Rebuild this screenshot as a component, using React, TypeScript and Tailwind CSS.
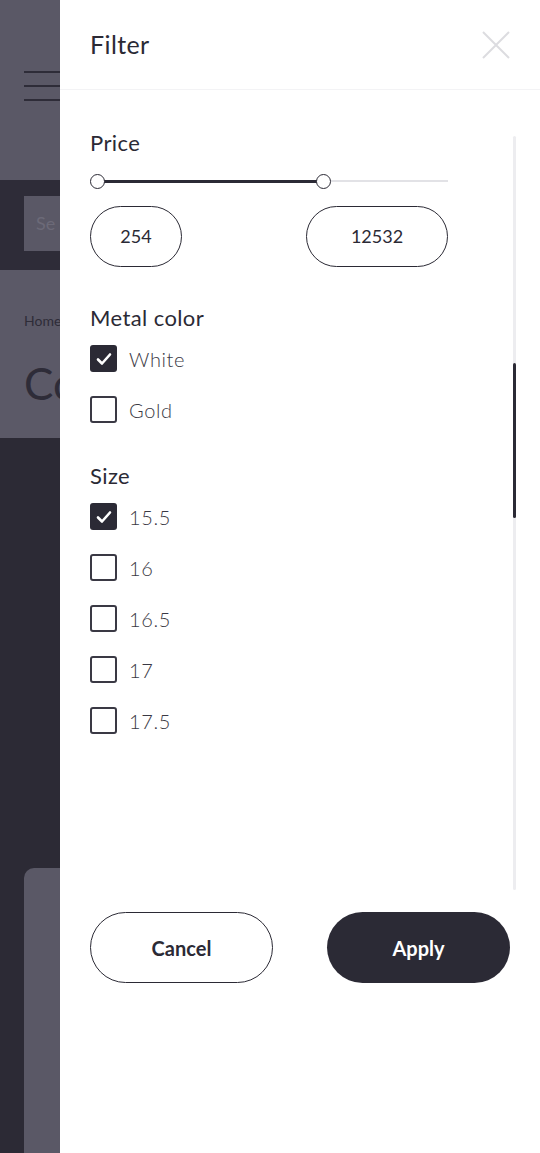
import { useState } from 'react'

const font = { fontFamily: 'Lato, "Noto Sans", sans-serif' }

type Opt = { label: string; checked: boolean }

function Check({ label, checked, onToggle }: Opt & { onToggle: () => void }) {
  return (
    <button onClick={onToggle} className="flex items-center gap-3 h-[27px] text-left">
      <span
        className={
          'w-[27px] h-[27px] rounded-[3px] flex items-center justify-center ' +
          (checked ? 'bg-[#2b2a35]' : 'border-2 border-[#3a3944] bg-white')
        }
      >
        {checked && (
          <svg width="16" height="14" viewBox="0 0 16 14" fill="none">
            <path d="M2 7.5l4 4L14 2.5" stroke="white" strokeWidth="2.6" strokeLinecap="round" strokeLinejoin="round" />
          </svg>
        )}
      </span>
      <span className="text-[20px] font-light text-[#3a3944] tracking-[0.6px]">{label}</span>
    </button>
  )
}

export default function App() {
  const [metal, setMetal] = useState<Opt[]>([
    { label: 'White', checked: true },
    { label: 'Gold', checked: false },
  ])
  const [sizes, setSizes] = useState<Opt[]>([
    { label: '15.5', checked: true },
    { label: '16', checked: false },
    { label: '16.5', checked: false },
    { label: '17', checked: false },
    { label: '17.5', checked: false },
  ])

  const toggle = (list: Opt[], i: number) => list.map((o, j) => (j === i ? { ...o, checked: !o.checked } : o))

  return (
    <div className="flex w-[540px] h-[1153px] overflow-hidden" style={font}>
      {/* dimmed page behind the drawer */}
      <div className="w-[60px] shrink-0 flex flex-col bg-[#2c2a35]">
        <div className="h-[180px] bg-[#5a5866] pt-[71px] pl-6 flex flex-col gap-[12px]">
          <div className="h-[2px] bg-[#2e2c38]" />
          <div className="h-[2px] bg-[#2e2c38]" />
          <div className="h-[2px] bg-[#2e2c38]" />
        </div>
        <div className="h-[90px] bg-[#2e2c38] pt-[16px] pl-6">
          <div className="h-[55px] bg-[#5a5866] pl-3 flex items-center text-[18px] text-[#6c6a78]">Se</div>
        </div>
        <div className="h-[168px] bg-[#5b5967] pl-6 pt-[40px]">
          <div className="text-[14px] text-[#2e2c38]">Home</div>
          <div className="text-[44px] leading-none mt-[30px] text-[#2e2c38]">Co</div>
        </div>
        <div className="flex-1 pl-6 pt-[430px]">
          <div className="h-full bg-[#5a5866] rounded-tl-[10px]" />
        </div>
      </div>

      {/* filter drawer */}
      <div className="flex-1 bg-white flex flex-col text-[#2b2a35]">
        <div className="h-[90px] shrink-0 border-b border-[#f3f3f5] flex items-center justify-between pl-[30px] pr-[30px]">
          <span className="text-[25px] tracking-[0.4px] text-[#2b2a35]">Filter</span>
          <button aria-label="Close">
            <svg width="28" height="28" viewBox="0 0 28 28" fill="none">
              <path d="M1 1l26 26M27 1L1 27" stroke="#dcdce0" strokeWidth="2" />
            </svg>
          </button>
        </div>

        <div className="h-[800px] shrink-0 flex">
          <div className="flex-1 pl-[30px] pr-[65px] pt-[39px]">
            <h3 className="text-[22px] leading-[28px] tracking-[0.4px]">Price</h3>
            <div className="mt-[17px] h-[14px] relative flex items-center">
              <div className="absolute left-[7px] right-0 h-[2px] bg-[#e2e2e6]" />
              <div className="absolute left-[7px] w-[226px] h-[3px] bg-[#2b2a35]" />
              <div className="absolute left-0 w-[15px] h-[15px] rounded-full border-[1.5px] border-[#2b2a35] bg-white" />
              <div className="absolute left-[226px] w-[15px] h-[15px] rounded-full border-[1.5px] border-[#2b2a35] bg-white" />
            </div>
            <div className="mt-[18px] flex justify-between">
              <div className="w-[92px] h-[61px] rounded-full border-[1.5px] border-[#2b2a35] flex items-center justify-center text-[18px]">254</div>
              <div className="w-[142px] h-[61px] rounded-full border-[1.5px] border-[#2b2a35] flex items-center justify-center text-[18px]">12532</div>
            </div>

            <h3 className="mt-[37px] text-[22px] leading-[28px] tracking-[0.4px]">Metal color</h3>
            <div className="mt-[13px] flex flex-col gap-[24px]">
              {metal.map((o, i) => (
                <Check key={o.label} {...o} onToggle={() => setMetal(p => toggle(p, i))} />
              ))}
            </div>

            <h3 className="mt-[39px] text-[22px] leading-[28px] tracking-[0.4px]">Size</h3>
            <div className="mt-[13px] flex flex-col gap-[24px]">
              {sizes.map((o, i) => (
                <Check key={o.label} {...o} onToggle={() => setSizes(p => toggle(p, i))} />
              ))}
            </div>
          </div>
          <div className="w-[3px] mr-[24px] mt-[46px] bg-[#ededf0] rounded-full flex flex-col">
            <div className="mt-[227px] h-[155px] bg-[#2b2a35] rounded-full" />
          </div>
        </div>

        <div className="mt-[22px] flex justify-between pl-[30px] pr-[30px]">
          <button className="w-[183px] h-[71px] rounded-full border-[1.5px] border-[#2b2a35] text-[20px] font-bold">Cancel</button>
          <button className="w-[183px] h-[71px] rounded-full bg-[#2b2a35] text-white text-[20px] font-bold">Apply</button>
        </div>
      </div>
    </div>
  )
}
